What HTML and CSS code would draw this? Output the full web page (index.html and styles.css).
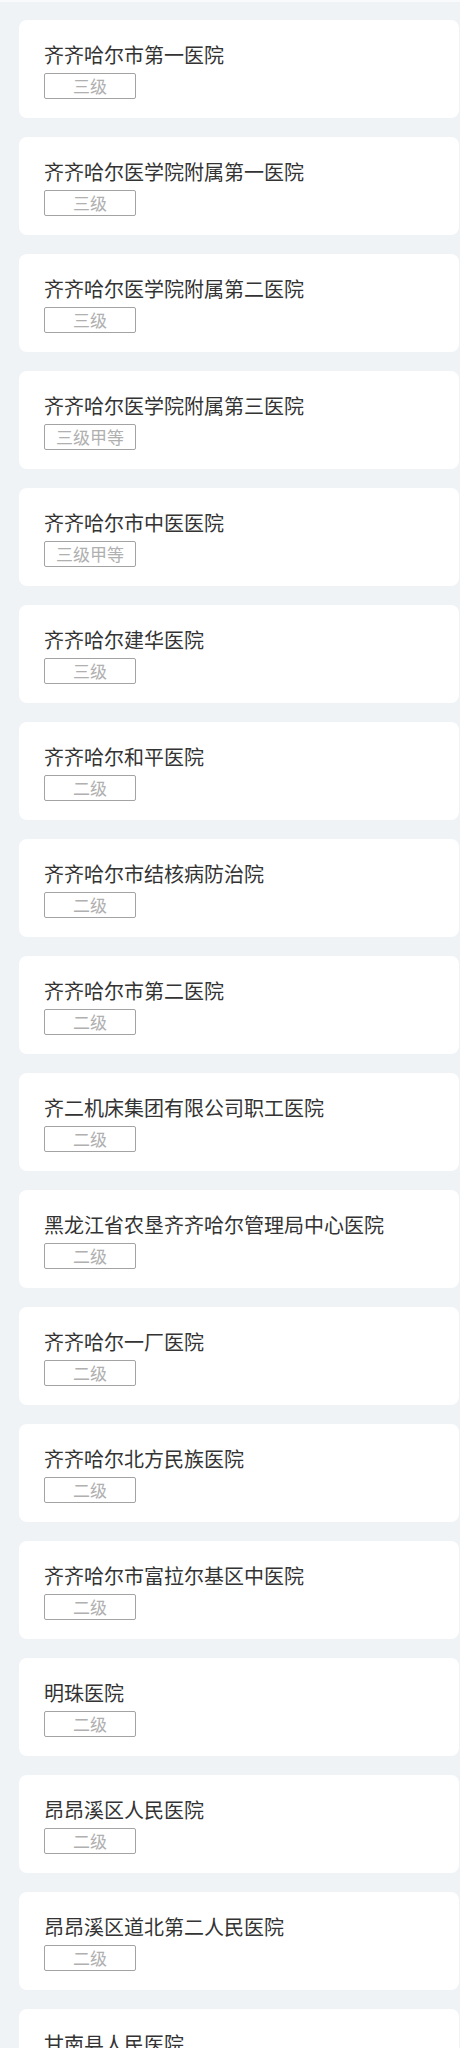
FILE: index.html
```html
<!DOCTYPE html>
<html lang="zh-CN">
<head>
<meta charset="utf-8">
<title>医院列表</title>
<link rel="stylesheet" href="styles.css">
</head>
<body>
<div class="topbar"></div>
<ul class="list">
  <li class="card"><div class="name">齐齐哈尔市第一医院</div><span class="level">三级</span></li>
  <li class="card"><div class="name">齐齐哈尔医学院附属第一医院</div><span class="level">三级</span></li>
  <li class="card"><div class="name">齐齐哈尔医学院附属第二医院</div><span class="level">三级</span></li>
  <li class="card"><div class="name">齐齐哈尔医学院附属第三医院</div><span class="level">三级甲等</span></li>
  <li class="card"><div class="name">齐齐哈尔市中医医院</div><span class="level">三级甲等</span></li>
  <li class="card"><div class="name">齐齐哈尔建华医院</div><span class="level">三级</span></li>
  <li class="card"><div class="name">齐齐哈尔和平医院</div><span class="level">二级</span></li>
  <li class="card"><div class="name">齐齐哈尔市结核病防治院</div><span class="level">二级</span></li>
  <li class="card"><div class="name">齐齐哈尔市第二医院</div><span class="level">二级</span></li>
  <li class="card"><div class="name">齐二机床集团有限公司职工医院</div><span class="level">二级</span></li>
  <li class="card"><div class="name">黑龙江省农垦齐齐哈尔管理局中心医院</div><span class="level">二级</span></li>
  <li class="card"><div class="name">齐齐哈尔一厂医院</div><span class="level">二级</span></li>
  <li class="card"><div class="name">齐齐哈尔北方民族医院</div><span class="level">二级</span></li>
  <li class="card"><div class="name">齐齐哈尔市富拉尔基区中医院</div><span class="level">二级</span></li>
  <li class="card"><div class="name">明珠医院</div><span class="level">二级</span></li>
  <li class="card"><div class="name">昂昂溪区人民医院</div><span class="level">二级</span></li>
  <li class="card"><div class="name">昂昂溪区道北第二人民医院</div><span class="level">二级</span></li>
  <li class="card"><div class="name">甘南县人民医院</div><span class="level">二级</span></li>
</ul>
</body>
</html>
```
FILE: styles.css
```css
html, body {
  margin: 0;
  padding: 0;
  background: #f0f3f6;
  font-family: "Noto Sans CJK SC", "Noto Sans", sans-serif;
}
.topbar {
  height: 2px;
  background: #f8fafb;
}
.list {
  list-style: none;
  margin: 0;
  padding: 18px 1px 0 19px;
}
.card {
  box-sizing: border-box;
  height: 98px;
  margin-bottom: 19px;
  padding: 24px 25px 19px;
  background: #ffffff;
  border-radius: 8px;
  display: flex;
  flex-direction: column;
  align-items: flex-start;
  gap: 7px;
}
.name {
  font-size: 20px;
  line-height: 22px;
  color: #333333;
  white-space: nowrap;
}
.level {
  box-sizing: border-box;
  width: 92px;
  height: 26px;
  border: 1px solid #a3a3a3;
  border-radius: 2px;
  font-size: 17px;
  line-height: 24px;
  color: #b0b0b0;
  text-align: center;
}
```
